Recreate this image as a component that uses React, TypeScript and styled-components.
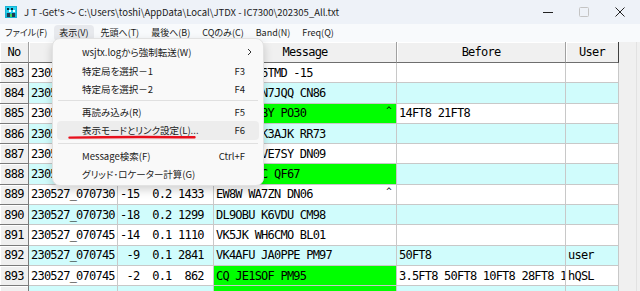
import React from 'react';
import styled, { createGlobalStyle } from 'styled-components';

const GlobalStyle = createGlobalStyle`
	html,
	body {
		margin: 0;
		padding: 0;
		background-color: #ffffff;
	}

	body {
		width: 640px;
		height: 291px;
		overflow: hidden;
	}
`;

interface IRow {
	no: number;
	time: string;
	stats: string;
	msg: string;
	before?: string;
	user?: string;
	green?: boolean;
	caret?: boolean;
}

const rows: Array<IRow> = [
	{ no: 883, time: '230527_070715', stats: '-12  0.2 1520', msg: 'JA1XR K6TMD -15' },
	{ no: 884, time: '230527_070715', stats: '-17  0.1 1764', msg: 'JR1AQN N7JQQ CN86' },
	{ no: 885, time: '230527_070715', stats: ' -8  0.3  980', msg: 'CQ WA7ABY PO30', before: '14FT8 21FT8', green: true, caret: true },
	{ no: 886, time: '230527_070715', stats: '-11  0.1 2105', msg: 'JR1AQN K3AJK RR73' },
	{ no: 887, time: '230527_070730', stats: '-19  0.2 1650', msg: 'JA7ABC VE7SY DN09' },
	{ no: 888, time: '230527_070730', stats: '-13  0.1 2390', msg: 'CQ VK2AC QF67', green: true },
	{ no: 889, time: '230527_070730', stats: '-15  0.2 1433', msg: 'EW8W WA7ZN DN06', caret: true },
	{ no: 890, time: '230527_070730', stats: '-18  0.2 1299', msg: 'DL9OBU K6VDU CM98' },
	{ no: 891, time: '230527_070745', stats: '-14  0.1 1110', msg: 'VK5JK WH6CMO BL01' },
	{ no: 892, time: '230527_070745', stats: ' -9  0.1 2841', msg: 'VK4AFU JA0PPE PM97', before: '50FT8', user: 'user' },
	{ no: 893, time: '230527_070745', stats: ' -2  0.1  862', msg: 'CQ JE1SOF PM95', before: '3.5FT8 50FT8 10FT8 28FT8 14FT8', user: 'hQSL', green: true },
	{ no: 894, time: '230527_070745', stats: '-10  0.2 1745', msg: 'CQ JA3XYZ PM74', green: true }
];

const menuBarItems = ['ファイル(F)', '表示(V)', '先頭へ(T)', '最後へ(B)', 'CQのみ(C)', 'Band(N)', 'Freq(Q)'];

function AppIcon() {
	return (
		<svg width="12" height="12" viewBox="0 0 12 12">
			<rect width="12" height="12" fill="#16b4d6" />
			<rect x="1" y="1" width="10" height="6" fill="#2ad0ee" />
			<rect x="2" y="2" width="2" height="2" fill="#0b2a3a" />
			<rect x="6" y="2" width="2" height="2" fill="#0b2a3a" />
			<rect x="4" y="4" width="2" height="2" fill="#ffffff" />
			<rect x="8" y="4" width="2" height="2" fill="#ffffff" />
			<rect x="2" y="7" width="3" height="4" fill="#1e3b52" />
			<rect x="7" y="7" width="3" height="4" fill="#1e3b52" />
			<rect x="5" y="8" width="2" height="3" fill="#3fd65a" />
		</svg>
	);
}

function Chevron() {
	return (
		<svg width="5" height="8" viewBox="0 0 5 8">
			<polyline points="1,1 4,4 1,7" fill="none" stroke="#333" strokeWidth="1" />
		</svg>
	);
}

function App() {
	return (
		<Window>
			<GlobalStyle />
			<TitleBar>
				<AppIcon />
				<TitleText>{"J T -Get's ～ C:\\Users\\toshi\\AppData\\Local\\JTDX - IC7300\\202305_All.txt"}</TitleText>
				<Controls>
					<ControlButton>
						<svg width="10" height="10" viewBox="0 0 10 10">
							<line x1="0" y1="5.5" x2="10" y2="5.5" stroke="#222" strokeWidth="1" />
						</svg>
					</ControlButton>
					<ControlButton>
						<svg width="10" height="10" viewBox="0 0 10 10">
							<rect x="0.5" y="0.5" width="9" height="9" rx="1" fill="none" stroke="#c4c4c4" strokeWidth="1" />
						</svg>
					</ControlButton>
					<ControlButton>
						<svg width="10" height="10" viewBox="0 0 10 10">
							<line x1="0.5" y1="0.5" x2="9.5" y2="9.5" stroke="#222" strokeWidth="1" />
							<line x1="9.5" y1="0.5" x2="0.5" y2="9.5" stroke="#222" strokeWidth="1" />
						</svg>
					</ControlButton>
				</Controls>
			</TitleBar>
			<MenuBar>
				{menuBarItems.map((m, i) => (
					<MenuBarItem key={m} $active={i === 1}>
						{m}
					</MenuBarItem>
				))}
			</MenuBar>
			<Body>
				<Table>
					<HeaderCell>No</HeaderCell>
					<HeaderCell>Time</HeaderCell>
					<HeaderCell>dB  DT Freq</HeaderCell>
					<HeaderCell>Message</HeaderCell>
					<HeaderCell>Before</HeaderCell>
					<HeaderCell $last>User</HeaderCell>
					{rows.map((r, i) => {
						const bg = i % 2 === 0 ? '#ffffff' : '#d0fcfc';
						return (
							<React.Fragment key={r.no}>
								<NoCell>{r.no}</NoCell>
								<Cell $bg={bg}>{r.time}</Cell>
								<Cell $bg={bg}>{r.stats}</Cell>
								<Cell $bg={r.green ? '#00ff00' : bg}>
									{r.msg}
									{r.caret && <Caret>^</Caret>}
								</Cell>
								<Cell $bg={bg}>{r.before}</Cell>
								<Cell $bg={bg}>{r.user}</Cell>
							</React.Fragment>
						);
					})}
				</Table>
				<ScrollStrip />
			</Body>

			<Dropdown>
				<DropItem>
					<span>wsjtx.logから強制転送(W)</span>
					<SubArrow>
						<Chevron />
					</SubArrow>
				</DropItem>
				<DropItem>
					<span>特定局を選択－1</span>
					<Shortcut>F3</Shortcut>
				</DropItem>
				<DropItem>
					<span>特定局を選択－2</span>
					<Shortcut>F4</Shortcut>
				</DropItem>
				<Separator $space={1.5} />
				<DropItem>
					<span>再読み込み(R)</span>
					<Shortcut>F5</Shortcut>
				</DropItem>
				<DropItem $highlight>
					<span>表示モードとリンク設定(L)...</span>
					<Shortcut>F6</Shortcut>
					<Annotation width="128" height="5" viewBox="0 0 128 5">
						<path d="M1.5 2.6 Q 50 1.6 126.5 2.2" fill="none" stroke="#e8101c" strokeWidth="2.4" strokeLinecap="round" />
					</Annotation>
				</DropItem>
				<Separator $space={3} />
				<DropItem>
					<span>Message検索(F)</span>
					<Shortcut>Ctrl+F</Shortcut>
				</DropItem>
				<DropItem>
					<span>グリッド･ロケーター計算(G)</span>
				</DropItem>
			</Dropdown>
		</Window>
	);
}

export default App;

const uiFont = `"Noto Sans CJK JP", "Noto Sans", sans-serif`;
const gridFont = `"DejaVu Sans Mono", "Liberation Mono", "Noto Sans CJK JP", monospace`;

const Window = styled.div`
	position: relative;
	width: 640px;
	height: 291px;
	display: flex;
	flex-direction: column;
	overflow: hidden;
	background-color: #ffffff;
`;

const TitleBar = styled.div`
	height: 24px;
	flex: none;
	display: flex;
	align-items: center;
	padding-left: 5px;
	background-color: #eef2f8;
	font-family: ${uiFont};
	font-size: 9.5px;
	color: #1a1a1a;
`;

const TitleText = styled.span`
	margin-left: 7px;
	white-space: nowrap;
	font-feature-settings: 'palt';
`;

const Controls = styled.div`
	margin-left: auto;
	display: flex;
	height: 100%;
	padding-right: 2px;
`;

const ControlButton = styled.div`
	width: 36px;
	height: 100%;
	display: flex;
	align-items: center;
	justify-content: center;

	svg {
		display: block;
	}
`;

const MenuBar = styled.div`
	height: 18px;
	flex: none;
	display: flex;
	align-items: center;
	gap: 2px;
	background-color: #f8fafc;
	font-family: ${uiFont};
	font-size: 9px;
	color: #1a1a1a;
`;

interface MenuBarItemProps {
	$active?: boolean;
}
const MenuBarItem = styled.div<MenuBarItemProps>`
	height: 16px;
	line-height: 16px;
	padding: 0 5px;
	border-radius: 4px;
	white-space: nowrap;
	font-feature-settings: 'palt';
	background-color: ${({ $active }) => ($active ? '#e7e9ed' : 'transparent')};
`;

const Body = styled.div`
	flex: 1;
	display: flex;
	overflow: hidden;
`;

const Table = styled.div`
	display: grid;
	grid-template-columns: 29px 89px 96px 183px 169px 53px;
	grid-template-rows: 21px;
	grid-auto-rows: 20.3px;
	align-content: start;
	font-family: ${gridFont};
	font-size: 12px;
	letter-spacing: -0.78px;
	color: #000000;
`;

interface HeaderCellProps {
	$last?: boolean;
}
const HeaderCell = styled.div<HeaderCellProps>`
	box-sizing: border-box;
	display: flex;
	align-items: center;
	justify-content: center;
	white-space: pre;
	overflow: hidden;
	background-color: #f0f0f0;
	border-right: 1px solid ${({ $last }) => ($last ? '#404040' : '#a0a0a0')};
	border-bottom: 1px solid #6e6e6e;
	box-shadow: inset 1px 1px 0 #ffffff;
`;

const NoCell = styled.div`
	box-sizing: border-box;
	display: flex;
	align-items: center;
	justify-content: center;
	background-color: #f0f0f0;
	border-right: 1px solid #7a7a7a;
	border-bottom: 1px solid #7a7a7a;
	box-shadow: inset 1px 1px 0 #ffffff;
`;

interface CellProps {
	$bg: string;
}
const Cell = styled.div<CellProps>`
	box-sizing: border-box;
	display: flex;
	align-items: center;
	padding: 0 0 0 2px;
	white-space: pre;
	overflow: hidden;
	background-color: ${({ $bg }) => $bg};
	border-right: 1px solid #c8c8c8;
	border-bottom: 1px solid #c8c8c8;
`;

const Caret = styled.span`
	margin-left: auto;
	margin-right: 5px;
	align-self: flex-start;
	margin-top: 1px;
	font-size: 9px;
`;

const ScrollStrip = styled.div`
	flex: 1;
	background-color: #f0f0f0;
	border-right: 3px solid #f0f0f0;
	box-shadow: inset -1px 0 0 #e2e2e2;
`;

const Dropdown = styled.div`
	position: absolute;
	left: 52px;
	top: 38px;
	width: 212px;
	box-sizing: border-box;
	padding: 4px 0 1px;
	background-color: #f9f9f9;
	border: 1px solid #e2e2e2;
	border-radius: 8px;
	box-shadow: 0 4px 10px rgba(0, 0, 0, 0.18);
	font-family: ${uiFont};
	font-size: 9.5px;
	color: #1b1b1b;
`;

interface DropItemProps {
	$highlight?: boolean;
}
const DropItem = styled.div<DropItemProps>`
	position: relative;
	height: 18.5px;
	margin: 0 4px;
	padding: 0 14px 0 25px;
	display: flex;
	align-items: center;
	border-radius: 4px;
	white-space: nowrap;
	font-feature-settings: 'palt';
	background-color: ${({ $highlight }) => ($highlight ? '#ededed' : 'transparent')};
`;

const Shortcut = styled.span`
	margin-left: auto;
`;

const SubArrow = styled.span`
	margin-left: auto;
	margin-right: -7px;

	svg {
		display: block;
	}
`;

interface SeparatorProps {
	$space: number;
}
const Separator = styled.div<SeparatorProps>`
	height: 1px;
	margin: ${({ $space }) => `${$space}px 5px`};
	background-color: #e0e0e0;
`;

const Annotation = styled.svg`
	position: absolute;
	left: 11px;
	bottom: 0px;
	display: block;
`;
